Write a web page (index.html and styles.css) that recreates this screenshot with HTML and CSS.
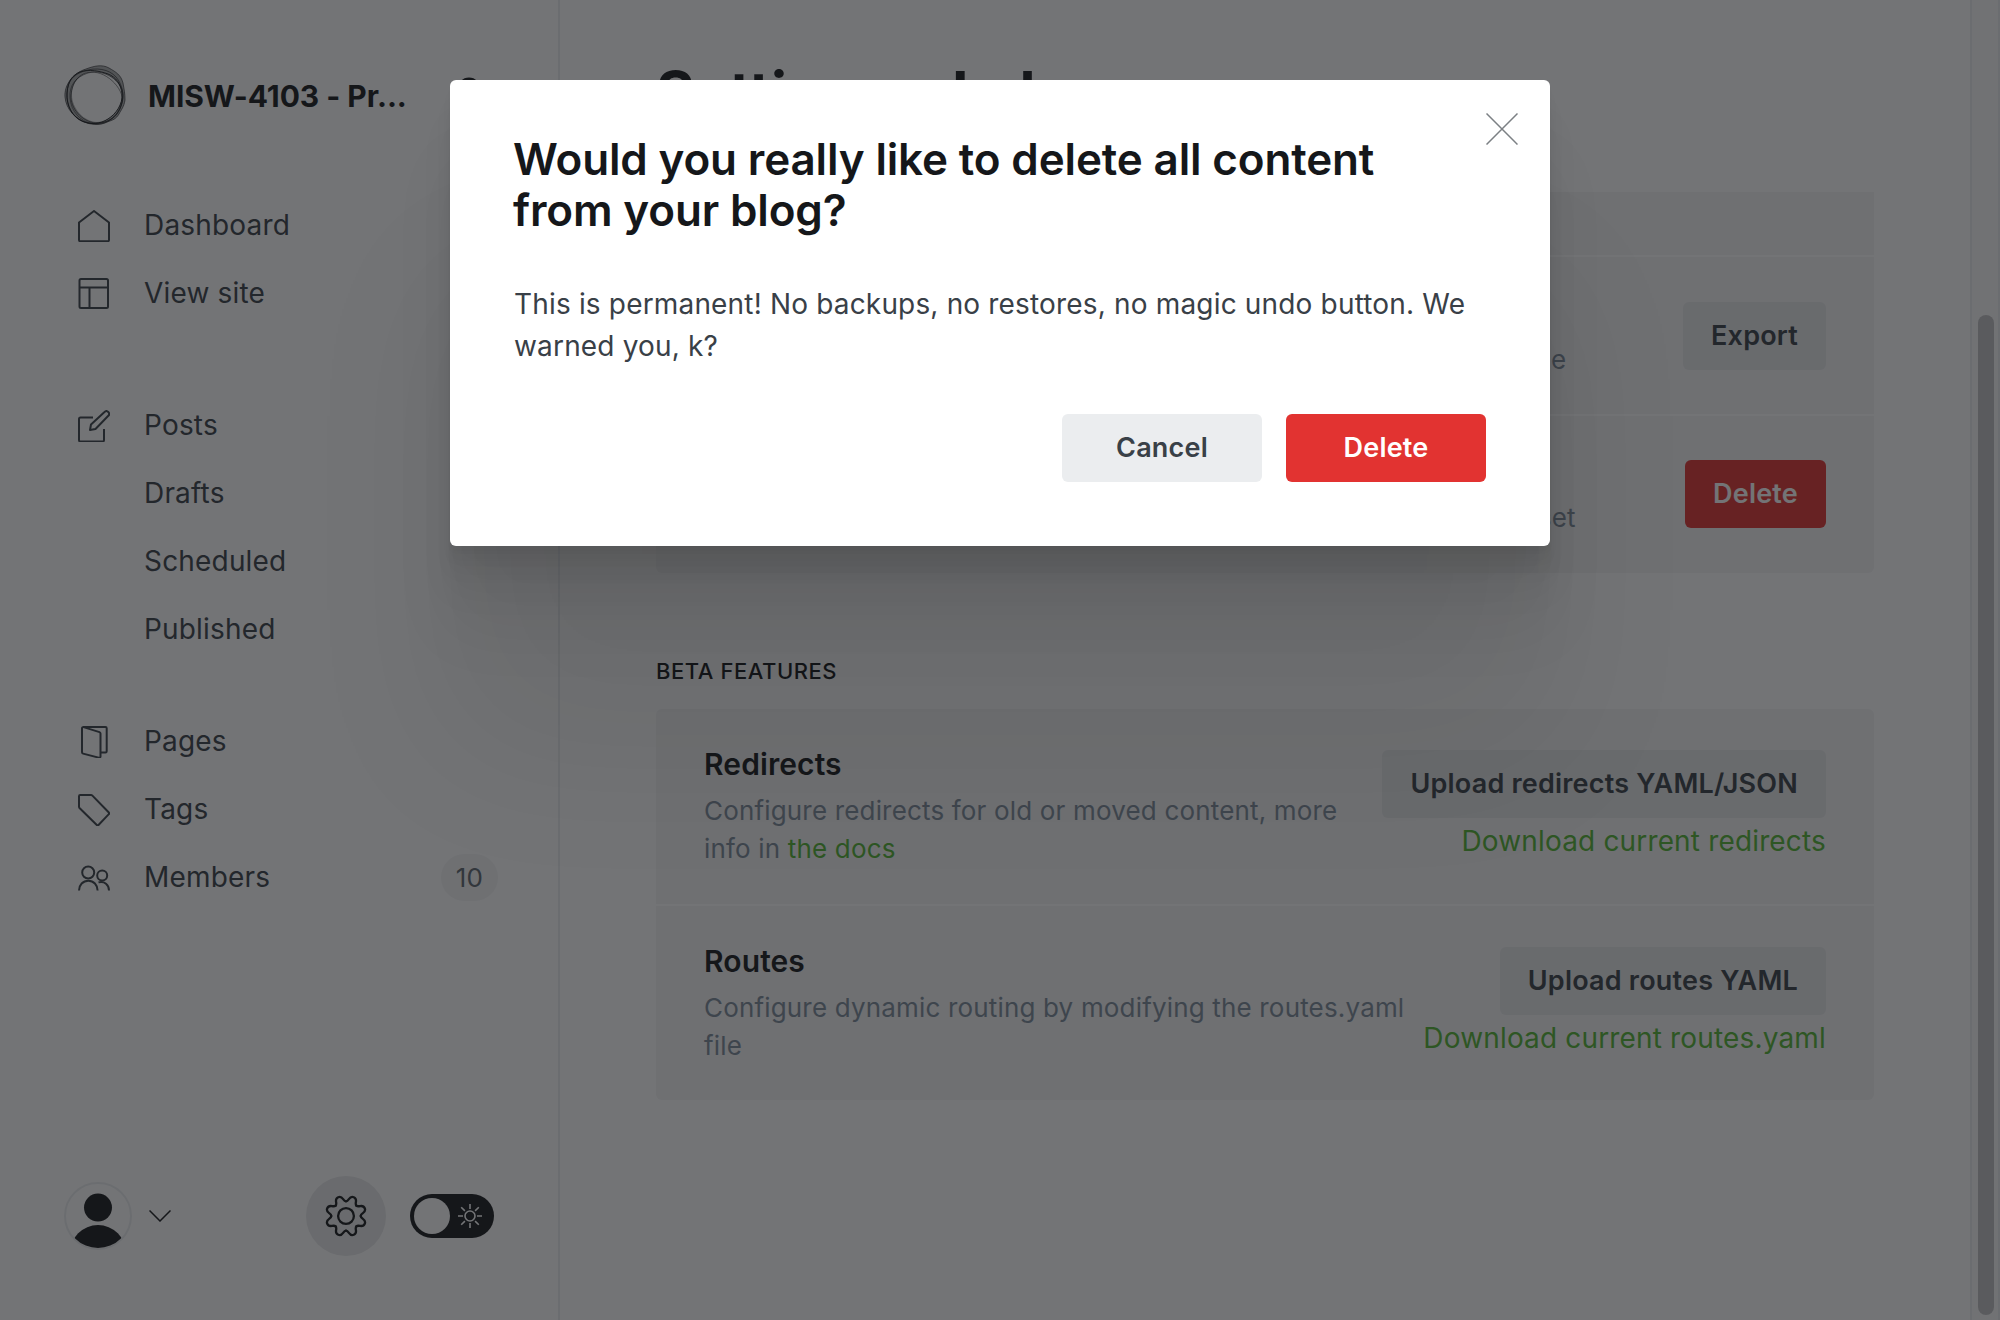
FILE: index.html
```html
<!DOCTYPE html>
<html lang="en">
<head>
<meta charset="utf-8">
<title>Settings - Labs</title>
<link rel="stylesheet" href="styles.css">
</head>
<body>
<div class="app">
  <nav class="sidebar">
    <header class="site">
      <svg class="site-logo" viewBox="0 0 62 62" fill="none" stroke="#15171a" stroke-width="1">
        <path fill="#15171a" fill-opacity=".35" fill-rule="evenodd" stroke="none" d="M22 4C30 1 38-1 45 3s12 7 14 15c1 6 2 10 2 17-1 7-4 10-6 14-3 5-6 6-12 8-6 3-14 3-20 1C11 54 2 44 1 32S9 8 22 4zM29 6C17 7 8 17 8 30s12 27 25 27 24-13 25-26S43 5 29 6z"/>
        <path stroke-opacity=".6" d="M22 4C30 1 38-1 45 3s12 7 14 15c1 6 2 10 2 17-1 7-4 10-6 14-3 5-6 6-12 8-6 3-14 3-20 1C11 54 2 44 1 32S9 8 22 4z"/>
        <path stroke-opacity=".9" d="M16 7c9-3 20-1 28 2s13 10 14 20-6 20-14 25-17 6-26 2S2 41 3 28 9 10 16 7z"/>
        <path stroke-opacity=".6" d="M20 6c12-4 25-2 32 6s9 20 4 32-19 16-32 14S3 44 3 30 9 10 20 6z"/>
        <path stroke-opacity=".6" d="M27 7C15 8 8 17 7 30s11 27 25 28 25-10 27-25S43 5 27 7z"/>
        <path stroke-opacity=".5" d="M24 8C12 12 5 20 6 33s10 24 24 26 25-9 28-22S40 3 24 8z"/>
      </svg>
      <h1 class="site-name">MISW-4103 - Pr...</h1>
      <svg class="search" viewBox="0 0 32 32" fill="none" stroke="#15171a" stroke-width="3"><circle cx="13" cy="13" r="10"/><path d="M20 20l10 10"/></svg>
    </header>
    <ul class="nav-group">
      <li class="nav-item"><svg class="icon" viewBox="0 0 32 32"><path d="M1 12.500 16 1l15 11.500V30a1.200 1.200 0 0 1-1.200 1.200H2.200A1.200 1.200 0 0 1 1 30z"/></svg><span>Dashboard</span></li>
      <li class="nav-item"><svg class="icon" viewBox="0 0 32 32"><rect x="1.500" y="1" width="28.500" height="29" rx="1.500"/><path d="M1.500 9.500H30M11.500 9.500V30"/></svg><span>View site</span></li>
    </ul>
    <ul class="nav-group">
      <li class="nav-item"><svg class="icon" viewBox="0 0 32 32"><path d="M15 7.500H2.500A1.500 1.500 0 0 0 1 9v21a1.500 1.500 0 0 0 1.500 1.500h22A1.500 1.500 0 0 0 26 30V19M12 20l1-5.500L26.500 2a2.600 2.600 0 0 1 3.800 3.800L17.500 19z"/></svg><span>Posts</span></li>
      <li class="nav-item sub"><span>Drafts</span></li>
      <li class="nav-item sub"><span>Scheduled</span></li>
      <li class="nav-item sub"><span>Published</span></li>
    </ul>
    <ul class="nav-group">
      <li class="nav-item"><svg class="icon" viewBox="0 0 32 32"><path d="M23 26.500h4.500a1.200 1.200 0 0 0 1.200-1.200V2.200A1.200 1.200 0 0 0 27.500 1H5M4 2.200v24a1.500 1.500 0 0 0 1.100 1.400l15.600 4A1.200 1.200 0 0 0 22.500 30.500V7.500a1.500 1.500 0 0 0-1-1.400L5.500 1.100A1.200 1.200 0 0 0 4 2.200z"/></svg><span>Pages</span></li>
      <li class="nav-item"><svg class="icon" viewBox="0 0 32 32"><path d="M2.200 1H13a2 2 0 0 1 1.400.6L30.600 18.300a1.500 1.500 0 0 1 0 2.100L20.500 31a1.200 1.200 0 0 1-1.700 0L1.500 14a2 2 0 0 1-.5-1.200V2.200A1.200 1.200 0 0 1 2.200 1z"/></svg><span>Tags</span></li>
      <li class="nav-item"><svg class="icon" viewBox="0 0 32 32"><circle cx="10.200" cy="10.500" r="6"/><path d="M1 28.500c0-5.500 4-9.800 9.300-9.800s9.300 4.300 9.300 9.800"/><circle cx="24.200" cy="13.500" r="5"/><path d="M20.500 20.400c6-1.700 10.500 2.500 10.500 8.100"/></svg><span>Members</span><span class="count">10</span></li>
    </ul>
    <footer class="user-bar">
      <svg class="avatar" viewBox="0 0 68 68"><defs><clipPath id="face"><circle cx="34" cy="34" r="32"/></clipPath></defs><circle cx="34" cy="34" r="33" fill="none" stroke="#eceef0" stroke-width="2"/><g clip-path="url(#face)" fill="#15171a"><circle cx="34" cy="25.600" r="14"/><circle cx="34" cy="71" r="28"/></g></svg>
      <svg class="chevron" viewBox="0 0 22 12" fill="none" stroke="#15171a" stroke-width="1.500"><path d="M.5.500 11 11 21.500.500"/></svg>
      <span class="gear"><svg viewBox="-21 -21 42 42" fill="none" stroke="#15171a" stroke-width="2.300" stroke-linecap="round"><circle r="7.900"/><g transform="rotate(22.500)"><path id="tooth" d="M-5.600-13.600C-2.600-14.900-5.200-20.300 0-20.300S2.600-14.900 5.600-13.600"/><use href="#tooth" transform="rotate(45)"/><use href="#tooth" transform="rotate(90)"/><use href="#tooth" transform="rotate(135)"/><use href="#tooth" transform="rotate(180)"/><use href="#tooth" transform="rotate(225)"/><use href="#tooth" transform="rotate(270)"/><use href="#tooth" transform="rotate(315)"/></g></svg></span>
      <span class="toggle"><i class="knob"></i><svg class="sun" viewBox="-12 -12 24 24" fill="none" stroke="#fff" stroke-width="1.600"><circle r="5"/><path d="M0-12v5M0 12V7M-12 0h5M12 0H7M-8.800-8.800l3.700 3.700M8.800-8.800 5.100-5.100M-8.800 8.800l3.700-3.700M8.800 8.800 5.100 5.100"/></svg></span>
    </footer>
  </nav>
  <main class="content">
    <h2 class="page-title"><span>Settings</span><svg class="crumb" viewBox="0 0 14 22" fill="none" stroke="#15171a" stroke-width="3"><path d="M3 3l8 8-8 8"/></svg><span>Labs</span></h2>
    <section class="card card-main">
      <div class="row row-cut"></div>
      <div class="row">
        <div class="info"><h4>Export your content</h4><p>Download all of your posts and settings in a single, glorious JSON file</p></div>
        <div class="actions"><button class="btn">Export</button></div>
      </div>
      <div class="row">
        <div class="info"><h4>Delete all content</h4><p class="loose">Permanently delete all posts and tags from the database, a hard reset</p></div>
        <div class="actions"><button class="btn btn-red">Delete</button></div>
      </div>
    </section>
    <h3 class="section-title">BETA FEATURES</h3>
    <section class="card">
      <div class="row">
        <div class="info"><h4>Redirects</h4><p>Configure redirects for old or moved content, more<br>info in <a>the docs</a></p></div>
        <div class="actions"><button class="btn">Upload redirects YAML/JSON</button><a>Download current redirects</a></div>
      </div>
      <div class="row">
        <div class="info"><h4>Routes</h4><p>Configure dynamic routing by modifying the routes.yaml<br>file</p></div>
        <div class="actions"><button class="btn">Upload routes YAML</button><a>Download current routes.yaml</a></div>
      </div>
    </section>
  </main>
  <div class="scrollbar"><div class="thumb"></div></div>
</div>
<div class="overlay">
  <div class="modal">
    <svg class="close" viewBox="0 0 32 32" fill="none" stroke="#7c8084" stroke-width="1.500"><path d="M.5.500l31 31M31.500.500l-31 31"/></svg>
    <h2>Would you really like to delete all content<br>from your blog?</h2>
    <p>This is permanent! No backups, no restores, no magic undo button. We<br>warned you, k?</p>
    <div class="modal-actions"><button class="btn btn-wide">Cancel</button><button class="btn btn-wide btn-red">Delete</button></div>
  </div>
</div>
</body>
</html>
```
FILE: styles.css
```css
* { box-sizing: border-box; margin: 0; padding: 0; }
body {
  width: 2000px; height: 1320px; overflow: hidden; background: #fff;
  font-family: Inter, "Liberation Sans", sans-serif; font-size: 28px; color: #15171a;
}
ul { list-style: none; }
a { color: #54b532; }
.app { display: flex; height: 1320px; }

.sidebar { display: flex; flex-direction: column; width: 560px; border-right: 2px solid #eceef0; padding: 65px 62px 64px 64px; }
.site { display: flex; align-items: center; height: 61px; margin-bottom: 65px; }
.site-logo { width: 62px; height: 62px; overflow: visible; }
.site-name { margin-left: 22px; width: 308px; font-size: 30px; font-weight: 700; letter-spacing: -.05px; white-space: nowrap; }
.search { width: 32px; height: 32px; margin-top: -8px; }
.nav-group { margin-bottom: 64px; }
.nav-group + .nav-group { margin-bottom: 44px; }
.nav-item { display: flex; align-items: center; height: 68px; padding-left: 14px; color: #394047; letter-spacing: .18px; }
.nav-item.sub { padding-left: 80px; }
.icon { width: 32px; height: 32px; margin: 2px 34px 0 0; fill: none; stroke: #394047; stroke-width: 2; stroke-linejoin: round; }
.count { margin-left: auto; width: 57px; height: 47px; margin-right: -2px; border-radius: 24px; background: #f4f5f6; color: #5d666f; font-size: 26px; line-height: 47px; text-align: center; }
.user-bar { display: flex; align-items: center; height: 80px; margin-top: auto; }
.avatar { width: 68px; height: 68px; }
.chevron { width: 22px; height: 12px; margin-left: 17px; }
.gear { display: grid; place-items: center; width: 80px; height: 80px; margin-left: auto; border-radius: 50%; background: #e8e9ea; }
.gear svg { width: 42px; height: 42px; }
.toggle { display: flex; align-items: center; justify-content: space-between; width: 84px; height: 44px; margin-left: 24px; margin-right: 2px; padding: 0 12px 0 4px; border-radius: 22px; background: #15171a; }
.knob { width: 36px; height: 36px; border-radius: 50%; background: #fff; }
.sun { width: 24px; height: 24px; }

.content { width: 1410px; padding: 55px 96px 0; }
.page-title { display: flex; align-items: center; height: 74px; margin-bottom: 63px; font-size: 59px; font-weight: 700; }
.crumb { width: 14px; height: 22px; margin: 14px 22px 0; }
.card { border-radius: 6px; background: #f4f5f6; overflow: hidden; }
.card-main { border-radius: 0 0 6px 6px; margin-bottom: 85px; }
.row { display: flex; justify-content: space-between; padding: 41px 48px 0; height: 195px; }
.row + .row { border-top: 2px solid #fff; height: 196px; }
.row.row-cut { height: 63px; padding: 0; }
.card-main .row + .row { height: 159px; padding-top: 45px; }
.card-main .row + .row + .row { padding-top: 44px; }
.info { white-space: nowrap; margin-top: -4px; }
.info h4 { font-size: 30px; line-height: 36px; font-weight: 600; letter-spacing: .1px; }
.info p { font-size: 26px; line-height: 37.600px; margin-top: 10px; color: #7c8b9a; letter-spacing: .17px; }
.card-main .info p { margin-top: 7px; letter-spacing: .15px; }
.card-main .info p.loose { letter-spacing: .27px; }
.actions { display: flex; flex-direction: column; align-items: flex-end; flex: none; }
.actions a { line-height: 46px; letter-spacing: .16px; }
.btn { height: 68px; padding: 0 28px; border: 0; border-radius: 6px; background: #e7e8e9; color: #394047; font: 600 27px/66px Inter, "Liberation Sans", sans-serif; letter-spacing: .2px; }
.btn-red { background: #e23331; color: #fff; }
.section-title { height: 51px; font-size: 22px; line-height: 27px; font-weight: 500; letter-spacing: .55px; }

.scrollbar { width: 30px; padding: 315px 4px 4px 6px; border-left: 2px solid #eceef0; border-right: 2px solid #eceef0; background: #fafafa; }
.thumb { width: 16px; height: 1000px; border-radius: 8px; background: #c1c1c3; }

.overlay { position: absolute; inset: 0; padding-top: 80px; background: rgba(21, 23, 26, .6); overflow: hidden; }
.modal {
  position: relative; width: 1100px; height: 466px; margin: 0 auto; padding: 54px 64px 0; border-radius: 6px; background: #fff;
  box-shadow:
    0 5.6px 4.4px rgba(0, 0, 0, .02), 0 13.4px 10.6px rgba(0, 0, 0, .028), 0 25px 20px rgba(0, 0, 0, .035),
    0 44.6px 35.8px rgba(0, 0, 0, .042), 0 83.6px 66.8px rgba(0, 0, 0, .05), 0 200px 160px rgba(0, 0, 0, .07);
}
.modal h2 { margin-left: -1px; font-size: 44px; line-height: 51px; font-weight: 600; letter-spacing: -.15px; white-space: nowrap; }
.modal p { margin-top: 47px; line-height: 42px; color: #394047; letter-spacing: .17px; white-space: nowrap; }
.modal-actions { display: flex; justify-content: flex-end; gap: 24px; margin-top: 47px; }
.btn-wide { width: 200px; background: #ebedef; }
.btn-wide.btn-red { background: #e23331; }
.close { position: absolute; top: 33px; right: 32px; width: 32px; height: 32px; }
```
